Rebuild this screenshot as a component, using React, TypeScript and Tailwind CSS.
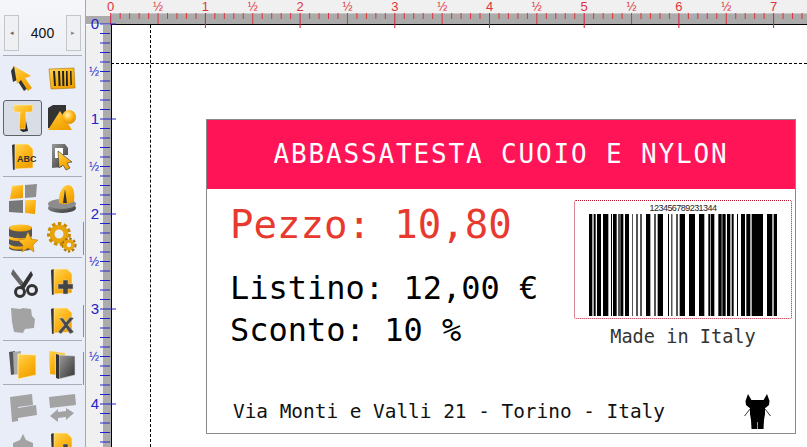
const mono = "font-['DejaVu_Sans_Mono',monospace]";
const sans = "font-['Liberation_Sans',Arial,sans-serif]";

const red = "#e0343c";
const blue = "#2222cc";

// Bars are in zoomed reference units, x then right edge
const bars = [
  [84, 94], [98, 104], [108, 120], [126, 142], [150, 153], [156, 167], [172, 176], [178, 187], [192, 204],
  [214, 216], [226, 230], [238, 242], [255, 268], [280, 284], [290, 306], [321, 324], [331, 334], [346, 350],
  [356, 372], [384, 402], [414, 430], [442, 448], [450, 460], [472, 482], [484, 494], [498, 508], [512, 518],
  [528, 531], [540, 552], [556, 568], [572, 606], [618, 634], [638, 648],
];

function fraction(i: number) {
  if (i % 10 === 0) return String(i / 10);
  if (i % 5 === 0) return "½";
  return "";
}

function TopRuler() {
  const ticks = Array.from({ length: 74 }, (_, i) => i);
  return (
    <svg width="721" height="25" viewBox="86 0 721 25" className="relative z-10 block shrink-0 overflow-visible">
      <rect x="86" y="0" width="721" height="13" fill="#f0f0f0" />
      <rect x="86" y="14" width="721" height="10" fill="#ababab" />
      <rect x="86" y="13" width="721" height="1" fill="#c8c8c8" />
      <rect x="86" y="13" width="25" height="3" fill="#f0f0f0" />
      <rect x="111" y="24" width="696" height="1" fill="#000" />
      {ticks.map((i) => {
        const x = 110.7 + i * 9.47;
        const major = i % 10 === 0;
        const half = i % 5 === 0;
        return (
          <g key={i}>
            <line x1={x} x2={x} y1="13" y2={major ? 28 : half ? 24 : 19} stroke={major ? "#d8203c" : red} strokeWidth="1" />
            {half && (
              <text x={x} y="11" textAnchor="middle" fontSize={major ? 13 : 12} fill={red} fontFamily="Liberation Sans">
                {fraction(i)}
              </text>
            )}
          </g>
        );
      })}
    </svg>
  );
}

function LeftRuler() {
  const ticks = Array.from({ length: 45 }, (_, i) => i);
  return (
    <svg width="25" height="422" viewBox="86 25 25 422" className="relative z-10 block shrink-0 overflow-visible">
      <rect x="86" y="25" width="17" height="422" fill="#f0f0f0" />
      <rect x="103" y="25" width="8" height="422" fill="#ababab" />
      <rect x="111" y="25" width="1" height="422" fill="#000" />
      {ticks.map((i) => {
        const y = 24 + i * 9.5;
        const major = i % 10 === 0;
        const half = i % 5 === 0;
        return (
          <g key={i}>
            <line x1="100" x2={major ? 116 : 110} y1={y} y2={y} stroke={blue} strokeWidth="1" />
            {half && (
              <text x="99" y={y + (major ? 5 : 4)} textAnchor="end" fontSize={major ? 15 : 12} fill={blue} fontFamily="Liberation Sans">
                {fraction(i)}
              </text>
            )}
          </g>
        );
      })}
    </svg>
  );
}

function Gradients() {
  return (
    <svg width="0" height="0" className="absolute">
      <defs>
        <linearGradient id="org" x1="0" y1="0" x2="0.6" y2="1">
          <stop offset="0" stopColor="#ffd65a" />
          <stop offset="0.5" stopColor="#fdb71a" />
          <stop offset="1" stopColor="#f0a000" />
        </linearGradient>
        <linearGradient id="drk" x1="0" y1="0" x2="1" y2="1">
          <stop offset="0" stopColor="#9a9a9a" />
          <stop offset="1" stopColor="#333" />
        </linearGradient>
        <radialGradient id="ball" cx="0.4" cy="0.35" r="0.7">
          <stop offset="0" stopColor="#fff2b8" />
          <stop offset="0.5" stopColor="#fdb71a" />
          <stop offset="1" stopColor="#d88a00" />
        </radialGradient>
      </defs>
    </svg>
  );
}

const O = "url(#org)";
const D = "url(#drk)";
const G = "#a3a3a3";

function Page({ fill = O }: { fill?: string }) {
  return (
    <>
      <path d="M5 4l3-1 1 25-3 1z" fill="#333" />
      <path d="M8 3h13l5 5v19l-18 1z" fill={fill} stroke="#fff1c0" strokeWidth=".6" />
    </>
  );
}

const icons: Record<string, React.ReactNode> = {
  arrow: (
    <>
      <path d="M7 3L4 8l2 11 4-2 7 11 4-3-6-10z" fill="#333" />
      <path d="M7 3l17 10-6 2 7 10-4 3-7-11-4 4z" fill={O} />
    </>
  ),
  barcode: (
    <>
      <path d="M3 6l25-1 1 20-24 1z" fill={O} stroke="#a87000" strokeWidth=".6" />
      <path d="M7 8h2l1 15H8zM12 8h2l.6 15h-2zM16 8h2l.4 15h-2zM20 8h1.600l.4 15h-2zM24 8h1.500l.4 14h-1.500z" fill="#222" />
    </>
  ),
  text: (
    <>
      <path d="M6 6l3-2h3l1 4 0 20 3 2 5-1-4-20-4-2z" fill="#222" />
      <path d="M7 3h19l-1 7h-6l-1 17h-6l1-17H7z" fill={O} stroke="#fff1c0" strokeWidth=".6" />
    </>
  ),
  shapes: (
    <>
      <path d="M2 6l5-3 13 0v10l-12 14-6-1z" fill="#333" />
      <path d="M2 28L14 9l12 19z" fill={O} />
      <circle cx="23" cy="15" r="7" fill="url(#ball)" />
    </>
  ),
  abc: (
    <>
      <Page />
      <text x="10" y="21" fontSize="9" fontWeight="700" fill="#333" fontFamily="Liberation Sans">ABC</text>
    </>
  ),
  find: (
    <>
      <path d="M6 3h13l3 4v7h-6v12l-10 1z" fill={D} />
      <path d="M9 7h8v10H9z" fill="#fff" />
      <path d="M12 10l14 11-5 1 3 5-4 2-3-5-4 3z" fill={O} stroke="#333" strokeWidth=".6" />
    </>
  ),
  grid: (
    <>
      <path d="M5 3l11-1v13L3 16z" fill={O} />
      <path d="M18 2l12-1-1 13-11 1z" fill="#8f8f8f" />
      <path d="M2 18l14-1v13L2 29z" fill="#777" />
      <path d="M18 17h11l-1 14-10-1z" fill={O} />
    </>
  ),
  dial: (
    <>
      <ellipse cx="16" cy="25" rx="14" ry="5" fill={D} />
      <ellipse cx="16" cy="21" rx="14" ry="5" fill="#8d8d8d" />
      <path d="M13 20c-1-8 3-18 9-18s7 9 6 16c-4 3-10 4-15 2z" fill={O} />
      <path d="M19 6l2 14h-4z" fill="#333" />
    </>
  ),
  data: (
    <>
      <path d="M2 6c0-4 23-4 23 0v20c0 4-23 4-23 0z" fill="#555" />
      <ellipse cx="13.500" cy="6" rx="11.500" ry="3.500" fill={O} />
      <path d="M2 14c4 3 19 3 23 0v3c-4 3-19 3-23 0z" fill={O} />
      <path d="M2 22c4 3 10 3 14 2v3c-4 1-10 1-14-2z" fill={O} />
      <path d="M21 10l3 7 7 1-5 5 1 7-6-4-6 4 1-7-5-5 7-1z" fill={O} stroke="#b07800" strokeWidth=".5" />
    </>
  ),
  gears: (
    <>
      <circle cx="13" cy="12" r="7" fill="none" stroke="#e8a40c" strokeWidth="5" />
      <circle cx="13" cy="12" r="10.500" fill="none" stroke="#c98a00" strokeWidth="3" strokeDasharray="3.500 2.500" />
      <circle cx="23" cy="23" r="4" fill="none" stroke="#e8a40c" strokeWidth="3.500" />
      <circle cx="23" cy="23" r="6.500" fill="none" stroke="#a87400" strokeWidth="2" strokeDasharray="2.500 1.800" />
    </>
  ),
  cut: (
    <>
      <path d="M6 3l13 17-3 3L4 8z" fill="#666" />
      <path d="M24 5l-10 15 3 3 9-14z" fill="#333" />
      <circle cx="13" cy="26" r="4.500" fill="none" stroke="#333" strokeWidth="3" />
      <circle cx="25" cy="24" r="4.500" fill="none" stroke="#333" strokeWidth="3" />
    </>
  ),
  paste: (
    <>
      <Page />
      <path d="M17 14h5v4h5v5h-5v5h-5v-5h-5v-5h5z" fill="#444" stroke="#ccc" strokeWidth=".5" />
    </>
  ),
  blob: <path d="M4 3l9 1 3-1 8 1 1 7 3 3-1 9-9 1-2 4-9-1-2-10z" fill={G} />,
  del: (
    <>
      <Page />
      <path d="M13 13l4 0 3 4 4-5 4 1-6 7 6 7-4 2-4-6-5 6-3-2 6-7z" fill="#4a4a4a" stroke="#ddd" strokeWidth=".5" />
    </>
  ),
  layersFront: (
    <>
      <path d="M2 3l6-1 1 23-5 1z" fill="#555" />
      <path d="M6 3l8-1v24l-7-1z" fill="#aaa" />
      <path d="M11 5l18 1v20l-18 4z" fill={O} stroke="#fff1c0" strokeWidth=".8" />
    </>
  ),
  layersBack: (
    <>
      <path d="M3 2l9 1v23l-8-1z" fill={O} />
      <path d="M8 3l11 1v22l-10 0z" fill="#fdc94a" />
      <path d="M13 6l16 1v19l-16 4z" fill={D} stroke="#ddd" strokeWidth=".6" />
      <path d="M10 5l3 1v24l-3-1z" fill="#333" />
    </>
  ),
  alignOff: <path d="M3 6l22-3 1 11-15 2v1l18-3 1 10-19 3v3l-6 1z" fill={G} />,
  spaceOff: (
    <>
      <path d="M3 6l26-3 1 11-26 3z" fill={G} />
      <path d="M4 25l8-7v3l8-1v-3l8 5-8 7v-3l-8 1v4z" fill={G} />
    </>
  ),
  upOff: <path d="M16 4l3 6 7 3v18H6V13l7-3z" fill={G} />,
};

function Tool({ name, selected }: { name: string; selected?: boolean }) {
  return (
    <div
      className={`flex h-[36px] w-[39px] items-center justify-center rounded-[3px] border ${
        selected ? "border-[#5f636b] bg-[#d9dde6]" : "border-transparent"
      }`}
    >
      <svg width="32" height="32" viewBox="0 0 32 32">
        {icons[name]}
      </svg>
    </div>
  );
}

function ToolGroup({ rows, selected, last }: { rows: string[][]; selected?: string; last?: boolean }) {
  return (
    <div className={`mx-[3px] flex flex-col ${last ? "" : "border-b border-[#a9acb2]"}`}>
      {rows.map((r) => (
        <div key={r[0]} className="flex h-[39px] shrink-0 items-center">
          <Tool name={r[0]} selected={selected === r[0]} />
          <Tool name={r[1]} />
        </div>
      ))}
    </div>
  );
}

function Toolbar() {
  return (
    <aside className="relative flex h-[447px] w-[86px] shrink-0 flex-col overflow-hidden border-r border-[#a6a8ad] bg-[#e9edf8]">
      <div className="flex h-[55px] shrink-0 flex-col justify-end bg-gradient-to-b from-[#f6f7fa] to-[#eceff6] pb-[4px]">
        <div className={`flex items-center justify-between px-[4px] ${sans}`}>
          <div className="flex h-[36px] w-[15px] items-center justify-center border border-[#c3c5c9] bg-[#eff0f3] text-[7px] text-[#666]">◂</div>
          <span className="text-[14px] text-[#111]">400</span>
          <div className="flex h-[36px] w-[15px] items-center justify-center border border-[#c3c5c9] bg-[#eff0f3] text-[7px] text-[#888]">▸</div>
        </div>
      </div>
      <div className="mx-[3px] h-px shrink-0 bg-[#a9acb2]" />
      <div className="shrink-0 pt-[3px]">
        <ToolGroup rows={[["arrow", "barcode"], ["text", "shapes"], ["abc", "find"]]} selected="text" />
      </div>
      <div className="shrink-0 pt-[2px]">
        <ToolGroup rows={[["grid", "dial"], ["data", "gears"]]} />
      </div>
      <div className="shrink-0 pt-[4px]">
        <ToolGroup rows={[["cut", "paste"], ["blob", "del"]]} />
      </div>
      <div className="shrink-0 pt-[4px]">
        <ToolGroup rows={[["layersFront", "layersBack"]]} />
      </div>
      <div className="shrink-0 pt-[2px]">
        <ToolGroup rows={[["alignOff", "spaceOff"], ["upOff", "paste"]]} last />
      </div>
      <div className="absolute left-[83px] top-[222px] h-[33px] w-px bg-[#8f9196]" />
      <div className="absolute left-[83px] top-[305px] h-[32px] w-px bg-[#8f9196]" />
      <div className="absolute left-[83px] top-[352px] h-[33px] w-px bg-[#8f9196]" />
    </aside>
  );
}

function Barcode() {
  return (
    <div className="flex h-[119px] w-[218px] shrink-0 flex-col items-center rounded-[2px] border border-dotted border-[#b5122a] pt-[2px]">
      <span className={`text-[9px] leading-[10px] tracking-[-0.55px] text-[#222] ${sans}`}>123456789231344</span>
      <svg width="188" height="102" viewBox="84 0 564 100" preserveAspectRatio="none" className="mt-[1px] block">
        {bars.map(([a, b]) => (
          <rect key={a} x={a} y="0" width={b - a} height="100" fill="#000" />
        ))}
      </svg>
    </div>
  );
}

function HorseLogo() {
  return (
    <svg width="27" height="36" viewBox="0 0 27 36">
      <path d="M4 0L1.500 7 2 11l6 5V7zM23 0l2.500 7-.5 4-6 5V7z" fill="#000" />
      <path d="M6 6h15v14l-1 6-.5 9H7.500L7 26l-1-6z" fill="#000" />
      <path d="M6 15l-5.500 7M21 15l5.500 7" stroke="#000" strokeWidth=".8" />
      <path d="M13.500 28v7" stroke="#fff" strokeWidth=".6" />
    </svg>
  );
}

function Label() {
  return (
    <div className={`flex h-[315px] w-[590px] flex-col border border-[#8a8a8a] bg-white ${mono}`}>
      <div className="flex h-[69px] shrink-0 items-center justify-center bg-[#ff1457] text-[26px] tracking-[1.85px] text-white">
        ABBASSATESTA CUOIO E NYLON
      </div>
      <div className="flex flex-1 justify-between pl-[23px] pr-[3px] pt-[11px]">
        <div className="flex flex-col">
          <div className="mt-[2px] text-[39px] leading-[46px] text-[#e8392f]">Pezzo: 10,80</div>
          <div className="mt-[19px] text-[32px] leading-[42px] text-black">Listino: 12,00 €</div>
          <div className="text-[32px] leading-[42px] text-black">Sconto: 10 %</div>
        </div>
        <div className="flex flex-col items-center">
          <Barcode />
          <div className="mt-[7px] text-[18.6px] leading-[22px] text-[#333]">Made in Italy</div>
        </div>
      </div>
      <div className="flex items-center justify-between pb-[3px] pl-[26px] pr-[24px]">
        <span className="text-[19.4px] text-[#111]">Via Monti e Valli 21 - Torino - Italy</span>
        <HorseLogo />
      </div>
    </div>
  );
}

export default function App() {
  return (
    <div className="flex h-[447px] w-[807px] overflow-hidden bg-white">
      <Gradients />
      <Toolbar />
      <main className="flex w-[721px] flex-col">
        <TopRuler />
        <div className="flex flex-1">
          <LeftRuler />
          <div className="relative flex-1 bg-white pl-[95px] pt-[94px]">
            <div className="absolute bottom-0 left-[39px] top-0 border-l border-dashed border-black" />
            <div className="absolute left-0 right-0 top-[38px] border-t border-dashed border-black" />
            <Label />
          </div>
        </div>
      </main>
    </div>
  );
}
